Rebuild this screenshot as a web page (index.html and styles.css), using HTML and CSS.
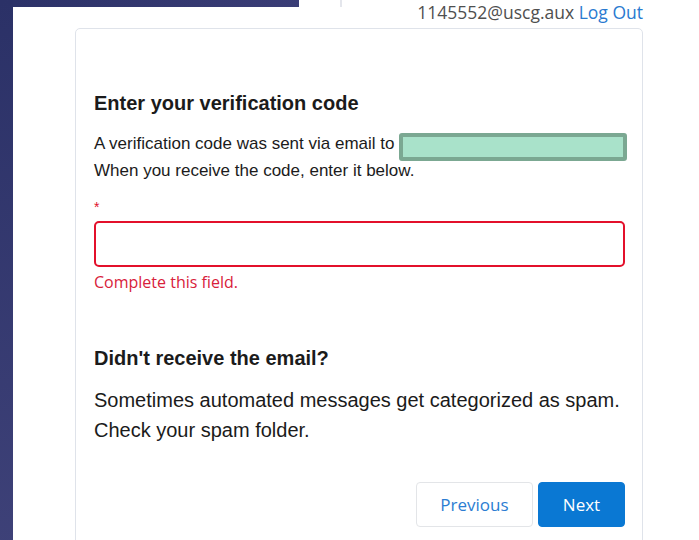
FILE: index.html
```html
<!DOCTYPE html>
<html lang="en">
<head>
<meta charset="utf-8">
<title>Enter your verification code</title>
<link rel="stylesheet" href="styles.css">
</head>
<body>
<div class="page">
  <div class="rail"></div>
  <div class="main">
    <header class="topbar">
      <div class="band"></div>
      <div class="divider"></div>
      <div class="account">
        <span class="user">1145552@uscg.aux</span>
        <a class="logout" href="#">Log Out</a>
      </div>
    </header>

    <section class="card">
      <h2 class="title">Enter your verification code</h2>
      <p class="intro"><span class="nowrap">A verification code was sent via email to <span class="masked"></span></span><br>When you receive the code, enter it below.</p>

      <label class="field-label" for="code"><span class="req">*</span></label>
      <input class="code-input" id="code" type="text" aria-invalid="true">
      <p class="error">Complete this field.</p>

      <h2 class="title title-second">Didn't receive the email?</h2>
      <p class="help">Sometimes automated messages get categorized as spam.<br>Check your spam folder.</p>

      <div class="actions">
        <button class="btn btn-secondary" type="button">Previous</button>
        <button class="btn btn-primary" type="button">Next</button>
      </div>
    </section>
  </div>
</div>
</body>
</html>
```

FILE: styles.css
```css
html, body {
  margin: 0;
  padding: 0;
  background: #ffffff;
}

.page {
  display: flex;
  min-height: 100vh;
  font-family: "Liberation Sans", Arial, sans-serif;
  color: #1b1b1b;
}

/* navy frame down the left edge */
.rail {
  width: 13px;
  flex: none;
  background: linear-gradient(180deg, #2b3167 0%, #3f4279 100%);
}

.main {
  flex: 1;
  min-width: 0;
}

/* top strip: navy band, thin divider, account links */
.topbar {
  display: flex;
  height: 28px;
}

.band {
  width: 286px;
  height: 7px;
  flex: none;
  background: linear-gradient(90deg, #2c3268 0%, #3a3d76 100%);
}

.divider {
  width: 2px;
  height: 7px;
  margin-left: 41px;
  flex: none;
  background: #e4e6ec;
}

.account {
  margin-left: auto;
  margin-right: 56px;
  padding-top: 2px;
  font-family: "Open Sans", sans-serif;
  font-size: 17.5px;
  line-height: 21px;
  white-space: nowrap;
}

.user {
  color: #4f4f4f;
}

.logout {
  color: #2a7ad0;
  text-decoration: none;
}

/* main card */
.card {
  box-sizing: border-box;
  width: 568px;
  margin-left: 62px;
  padding: 62px 17px 40px 18px;
  border: 1px solid #dfe3ea;
  border-radius: 5px;
  min-height: 560px;
}

.title {
  margin: 0;
  font-size: 20px;
  line-height: 24px;
  font-weight: bold;
  color: #1b1b1b;
}

.intro {
  margin: 16px 0 0;
  font-size: 17px;
  line-height: 26px;
  color: #1b1b1b;
}

.nowrap {
  white-space: nowrap;
}

.masked {
  display: inline-block;
  box-sizing: border-box;
  width: 228px;
  height: 28px;
  margin: -3px 0 -3px 0;
  vertical-align: -9px;
  background: #a9e2ca;
  border: 4px solid #7ba892;
  border-radius: 3px;
}

.field-label {
  display: block;
  margin-top: 14px;
  font-size: 14px;
  line-height: 18px;
}

.req {
  color: #e0112b;
}

.code-input {
  display: block;
  box-sizing: border-box;
  width: 531px;
  height: 46px;
  margin: 5px 0 0;
  padding: 0 12px;
  border: 2px solid #e3102b;
  border-radius: 5px;
  background: #ffffff;
  font-size: 17px;
  outline: none;
}

.error {
  margin: 5px 0 0;
  font-family: "Open Sans", sans-serif;
  font-size: 16px;
  line-height: 20px;
  color: #d8213b;
}

.title-second {
  margin-top: 54px;
}

.help {
  margin: 15px 0 0;
  font-size: 20px;
  line-height: 30px;
  color: #1b1b1b;
}

.actions {
  display: flex;
  justify-content: flex-end;
  gap: 5px;
  margin-top: 37px;
}

.btn {
  box-sizing: border-box;
  height: 45px;
  padding: 0;
  border-radius: 4px;
  font-family: "Open Sans", sans-serif;
  font-size: 17px;
  cursor: pointer;
}

.btn-secondary {
  width: 117px;
  background: #ffffff;
  border: 1px solid #e3e5e8;
  color: #2b7dd2;
}

.btn-primary {
  width: 87px;
  background: #0a78d3;
  border: 1px solid #0a78d3;
  color: #ffffff;
}
```
